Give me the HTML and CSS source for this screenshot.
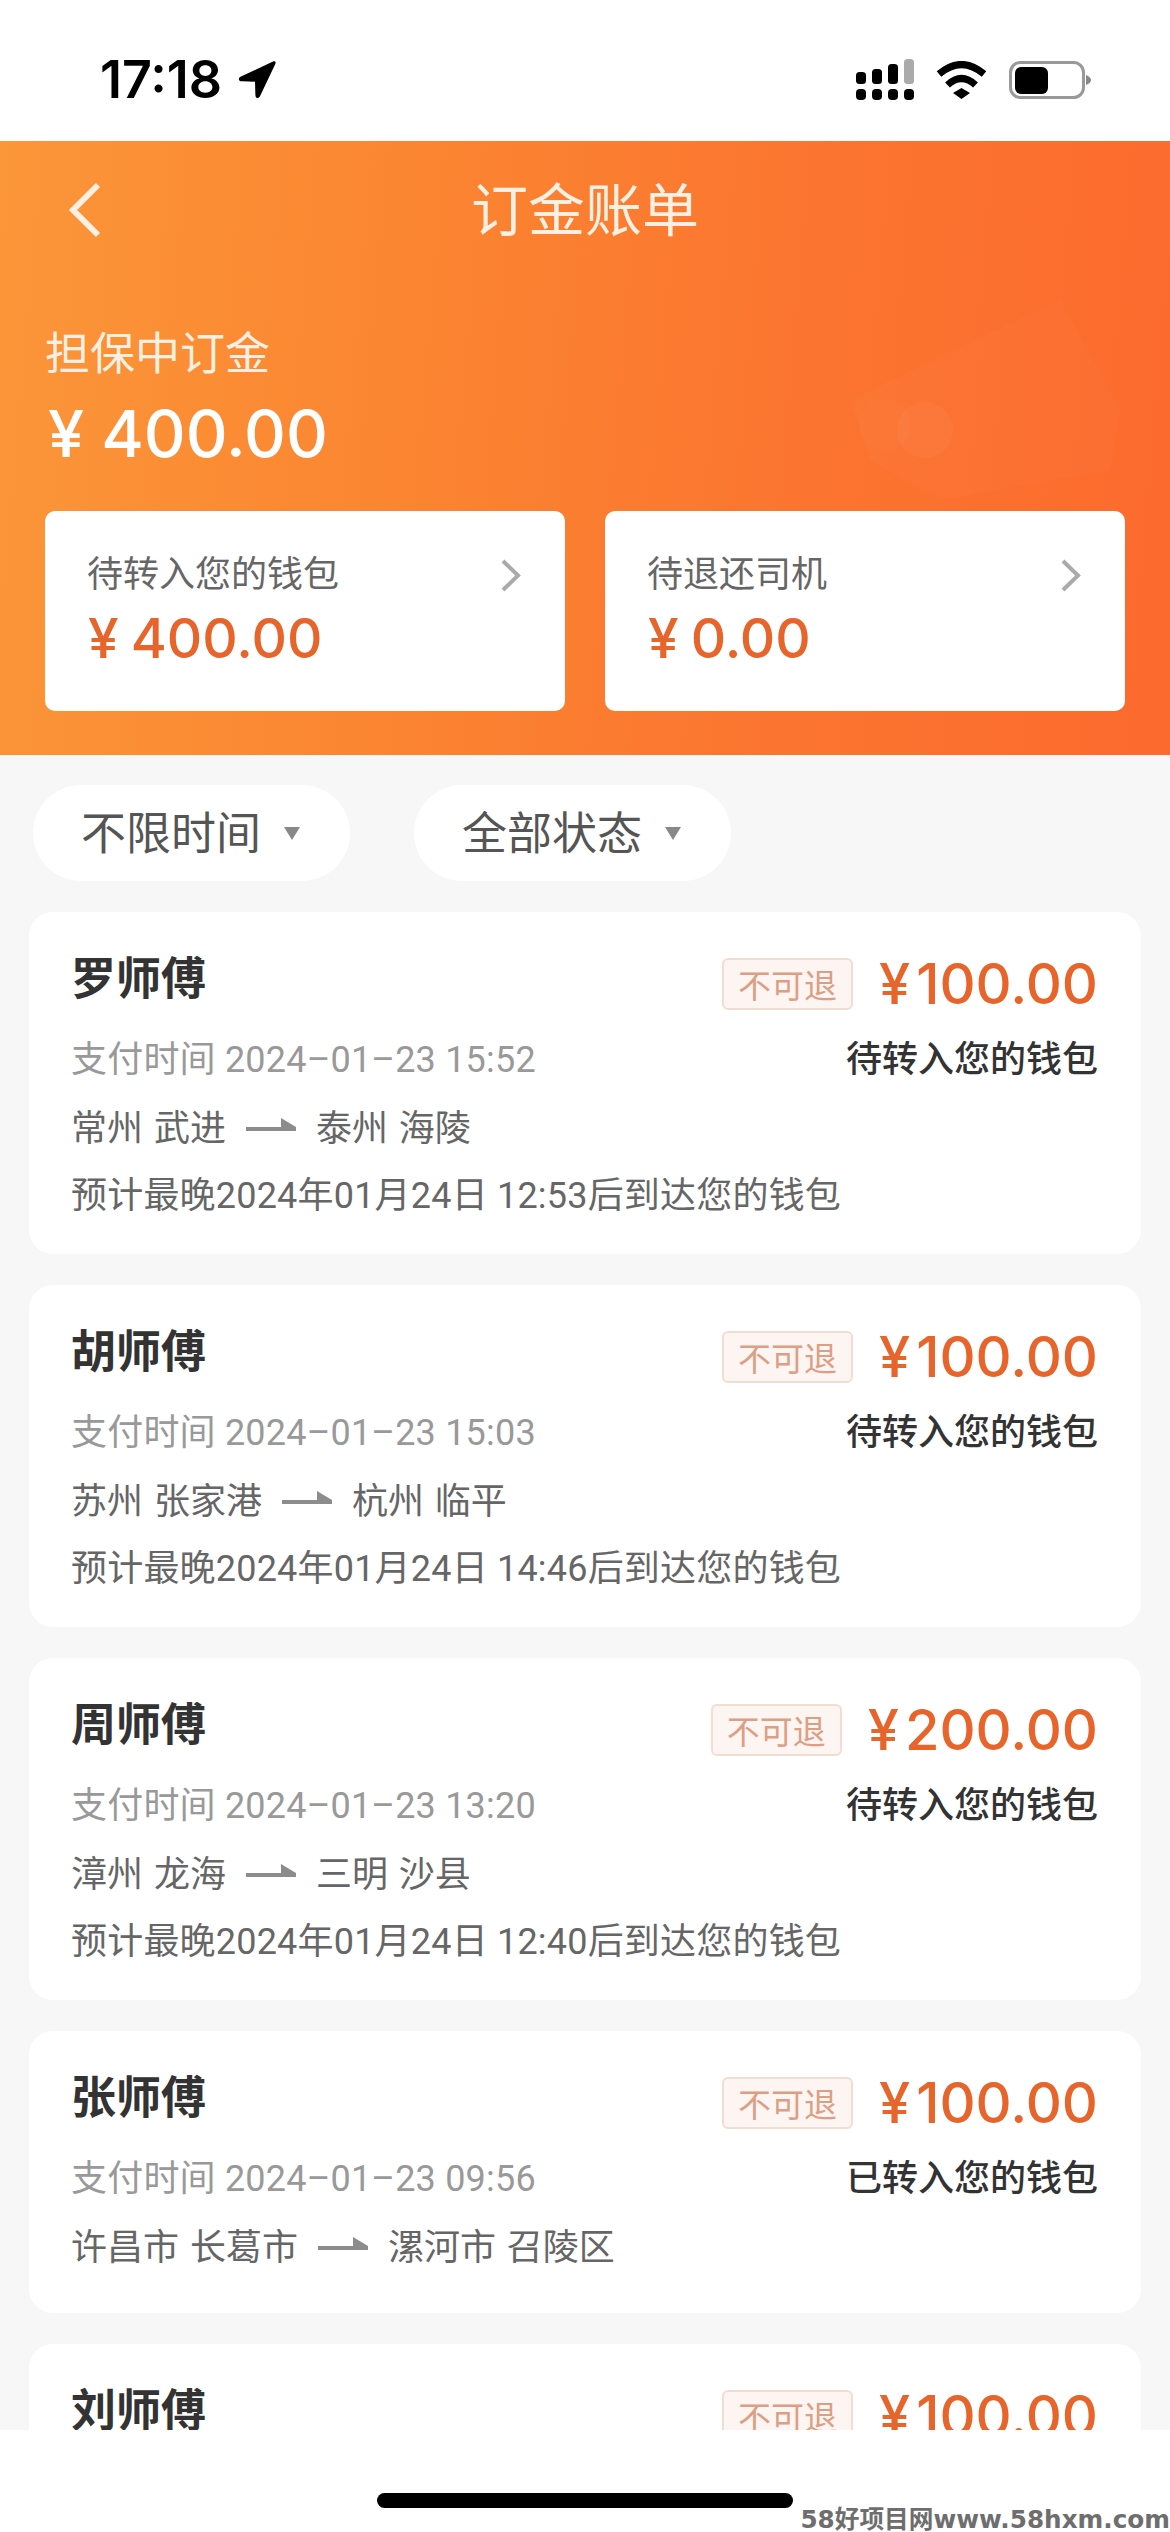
FILE: index.html
```html
<!DOCTYPE html>
<html lang="zh-CN">
<head>
    <meta charset="UTF-8">
    <meta name="viewport" content="width=device-width, initial-scale=1.0">
    <title>订金账单</title>
    <link rel="stylesheet" href="styles.css">
</head>
<body>

    <div class="status-bar">
        <div class="status-time">
            <span>17:18</span>
            <svg class="location-icon" viewBox="0 0 38 37"><path d="M35 .6 3 15.6c-3.4 1.700-2.600 4.600 1 4.700l13 .4.400 13.300c.1 3.600 3.200 4.200 4.700 1L37.300 3c.9-2-.4-3.300-2.300-2.400z"/></svg>
        </div>
        <div class="status-icons">
            <svg class="signal-icon" viewBox="0 0 58 41">
                <rect x="0" y="13" width="10" height="12" rx="3.500"/>
                <rect x="16" y="10" width="10" height="15" rx="3.500"/>
                <rect x="32" y="5" width="10" height="20" rx="3.500"/>
                <rect class="signal-off" x="48" y="0" width="10" height="25" rx="3.500"/>
                <rect x="0" y="30" width="10" height="11" rx="4"/>
                <rect x="16" y="30" width="10" height="11" rx="4"/>
                <rect x="32" y="30" width="10" height="11" rx="4"/>
                <rect x="48" y="30" width="10" height="11" rx="4"/>
            </svg>
            <svg class="wifi-icon" viewBox="0 0 51 38">
                <path d="M3 13Q25.500-6 48 13" fill="none" stroke="#000" stroke-width="7"/>
                <path d="M11.500 24Q25.500 11 39.500 24" fill="none" stroke="#000" stroke-width="7"/>
                <path d="M17 32 25.500 27 34 32 25.500 38z"/>
            </svg>
            <svg class="battery-icon" viewBox="0 0 82 38">
                <rect x="1.500" y="1.500" width="73" height="35" rx="10" fill="none" stroke="#999" stroke-width="3"/>
                <rect x="6" y="6" width="33" height="27" rx="6"/>
                <path d="M77 14c3 1 5 3 5 5s-2 4-5 5z" fill="#888"/>
            </svg>
        </div>
    </div>

    <div class="header">
        <!-- faint bank card behind the summary -->
        <svg class="header-decor" viewBox="0 0 410 220">
            <path d="M90 100 300 0 360 110 350 170 180 200 110 160z" fill="#fff" opacity="0.018"/>
            <circle cx="165" cy="130" r="28" fill="#fff" opacity="0.035"/>
            <circle cx="125" cy="125" r="26" fill="#fff" opacity="0.015"/>
        </svg>
        <div class="nav">
            <svg class="back-icon" viewBox="0 0 32 56"><path d="M29 3 4 28l25 25" fill="none" stroke="#fdf0e2" stroke-width="6"/></svg>
            <div class="nav-title">订金账单</div>
        </div>
        <div class="held-label">担保中订金</div>
        <div class="held-amount"><span class="yen">¥</span>400.00</div>
        <div class="summary">
            <div class="summary-card">
                <div class="summary-top">
                    <span>待转入您的钱包</span>
                    <svg class="chevron" viewBox="0 0 20 33"><path d="M2 2l15 14.500L2 31" fill="none" stroke="#aaa" stroke-width="4"/></svg>
                </div>
                <div class="summary-amount"><span class="yen">¥</span>400.00</div>
            </div>
            <div class="summary-card">
                <div class="summary-top">
                    <span>待退还司机</span>
                    <svg class="chevron" viewBox="0 0 20 33"><path d="M2 2l15 14.500L2 31" fill="none" stroke="#aaa" stroke-width="4"/></svg>
                </div>
                <div class="summary-amount"><span class="yen">¥</span>0.00</div>
            </div>
        </div>
    </div>

    <div class="content">
        <div class="filters">
            <div class="filter"><span>不限时间</span><i class="caret"></i></div>
            <div class="filter"><span>全部状态</span><i class="caret"></i></div>
        </div>

        <div class="bill">
            <div class="bill-top">
                <div class="driver">罗师傅</div>
                <div class="bill-money">
                    <span class="tag">不可退</span>
                    <span class="bill-amount"><span class="yen">¥</span>100.00</span>
                </div>
            </div>
            <div class="bill-mid">
                <div class="pay-time">支付时间 2024–01–23 15:52</div>
                <div class="bill-status">待转入您的钱包</div>
            </div>
            <div class="route">
                <span>常州 武进</span>
                <svg class="route-arrow" viewBox="0 0 50 14"><path d="M0 9h35V0l15 9v4H0z"/></svg>
                <span>泰州 海陵</span>
            </div>
            <div class="eta">预计最晚2024年01月24日 12:53后到达您的钱包</div>
        </div>

        <div class="bill">
            <div class="bill-top">
                <div class="driver">胡师傅</div>
                <div class="bill-money">
                    <span class="tag">不可退</span>
                    <span class="bill-amount"><span class="yen">¥</span>100.00</span>
                </div>
            </div>
            <div class="bill-mid">
                <div class="pay-time">支付时间 2024–01–23 15:03</div>
                <div class="bill-status">待转入您的钱包</div>
            </div>
            <div class="route">
                <span>苏州 张家港</span>
                <svg class="route-arrow" viewBox="0 0 50 14"><path d="M0 9h35V0l15 9v4H0z"/></svg>
                <span>杭州 临平</span>
            </div>
            <div class="eta">预计最晚2024年01月24日 14:46后到达您的钱包</div>
        </div>

        <div class="bill">
            <div class="bill-top">
                <div class="driver">周师傅</div>
                <div class="bill-money">
                    <span class="tag">不可退</span>
                    <span class="bill-amount"><span class="yen">¥</span>200.00</span>
                </div>
            </div>
            <div class="bill-mid">
                <div class="pay-time">支付时间 2024–01–23 13:20</div>
                <div class="bill-status">待转入您的钱包</div>
            </div>
            <div class="route">
                <span>漳州 龙海</span>
                <svg class="route-arrow" viewBox="0 0 50 14"><path d="M0 9h35V0l15 9v4H0z"/></svg>
                <span>三明 沙县</span>
            </div>
            <div class="eta">预计最晚2024年01月24日 12:40后到达您的钱包</div>
        </div>

        <div class="bill">
            <div class="bill-top">
                <div class="driver">张师傅</div>
                <div class="bill-money">
                    <span class="tag">不可退</span>
                    <span class="bill-amount"><span class="yen">¥</span>100.00</span>
                </div>
            </div>
            <div class="bill-mid">
                <div class="pay-time">支付时间 2024–01–23 09:56</div>
                <div class="bill-status">已转入您的钱包</div>
            </div>
            <div class="route">
                <span>许昌市 长葛市</span>
                <svg class="route-arrow" viewBox="0 0 50 14"><path d="M0 9h35V0l15 9v4H0z"/></svg>
                <span>漯河市 召陵区</span>
            </div>
        </div>

        <div class="bill">
            <div class="bill-top">
                <div class="driver">刘师傅</div>
                <div class="bill-money">
                    <span class="tag">不可退</span>
                    <span class="bill-amount"><span class="yen">¥</span>100.00</span>
                </div>
            </div>
        </div>
    </div>

    <div class="home-area">
        <div class="home-bar"></div>
        <div class="watermark">58好项目网www.58hxm.com</div>
    </div>

</body>
</html>
```

FILE: styles.css
```css
* {
    box-sizing: border-box;
}

body {
    margin: 0;
    width: 1170px;
    height: 2532px;
    display: flex;
    flex-direction: column;
    overflow: hidden;
    background-color: #fff;
    font-family: Roboto, "Noto Sans CJK SC", sans-serif;
}

/* Status bar */
.status-bar {
    height: 141px;
    flex-shrink: 0;
    display: flex;
    justify-content: space-between;
    align-items: center;
    padding: 18px 79px 0 100px;
}

.status-time {
    display: flex;
    align-items: center;
    gap: 16px;
    font-family: Inter, sans-serif;
    font-size: 52px;
    font-weight: 600;
    line-height: 50px;
    color: #000;
}

.location-icon {
    width: 38px;
    height: 37px;
}

.status-icons {
    display: flex;
    align-items: center;
    gap: 22px;
}

.signal-icon {
    width: 58px;
    height: 41px;
}

.signal-off {
    fill: #aaa;
}

.wifi-icon {
    width: 51px;
    height: 38px;
}

.battery-icon {
    width: 82px;
    height: 38px;
}

/* Orange header */
.header {
    position: relative;
    height: 614px;
    flex-shrink: 0;
    overflow: hidden;
    padding: 0 45px;
    background: linear-gradient(95deg, #fb9639 0%, #fb8531 35%, #fb7630 65%, #fc6a2d 100%);
    color: #fdf0e2;
}

.header-decor {
    position: absolute;
    left: 760px;
    top: 159px;
    width: 410px;
    height: 220px;
}

.nav {
    position: relative;
    height: 142px;
    display: flex;
    justify-content: center;
    align-items: center;
}

.back-icon {
    position: absolute;
    left: 24px;
    top: 41px;
    width: 32px;
    height: 56px;
}

.nav-title {
    font-size: 57px;
    line-height: 70px;
}

.held-label {
    position: relative;
    margin-top: 42px;
    font-size: 45px;
    line-height: 60px;
}

.held-amount {
    position: relative;
    margin-top: 7px;
    padding-left: 3px;
    font-family: Inter, "Noto Sans CJK SC", sans-serif;
    font-size: 65px;
    font-weight: 500;
    line-height: 84px;
    color: #fff;
}

.held-amount .yen {
    margin-right: 17px;
}

.yen {
    margin-right: 6px;
}

.summary {
    position: relative;
    margin-top: 35px;
    display: flex;
    gap: 40px;
}

.summary-card {
    width: 520px;
    height: 200px;
    padding: 39px 44px 0 42px;
    border-radius: 10px;
    background-color: #fff;
}

.summary-top {
    display: flex;
    justify-content: space-between;
    align-items: center;
    height: 50px;
    font-size: 36px;
    line-height: 50px;
    color: #666;
}

.chevron {
    width: 20px;
    height: 33px;
}

.summary-amount {
    margin-top: -2px;
    padding-left: 1px;
    font-family: Inter, "Noto Sans CJK SC", sans-serif;
    font-size: 55px;
    font-weight: 500;
    line-height: 80px;
    color: #e7642b;
}

.summary-amount .yen {
    margin-right: 12px;
}

/* Filters and bills */
.content {
    flex: 1;
    min-height: 0;
    overflow: hidden;
    padding: 30px 29px 0;
    background-color: #f7f7f7;
}

.filters {
    display: flex;
    gap: 64px;
    margin: 0 0 31px 4px;
}

.filter {
    height: 96px;
    display: flex;
    align-items: center;
    gap: 23px;
    padding: 0 50px 6px 48px;
    border-radius: 48px;
    background-color: #fff;
    font-size: 45px;
    color: #555;
}

.caret {
    width: 0;
    height: 0;
    margin-top: 6px;
    border-left: 8px solid transparent;
    border-right: 8px solid transparent;
    border-top: 13px solid #888;
}

.bill {
    margin-bottom: 31px;
    padding: 24px 43px 28px 42px;
    border-radius: 24px;
    background-color: #fff;
}

.bill-top,
.bill-mid {
    display: flex;
    justify-content: space-between;
    align-items: center;
}

.bill-top {
    height: 78px;
}

.bill-mid {
    height: 83px;
}

.driver {
    font-size: 45px;
    font-weight: 700;
    color: #333;
}

.bill-money {
    display: flex;
    align-items: center;
    gap: 26px;
    margin-top: 18px;
}

.tag {
    width: 131px;
    height: 52px;
    display: flex;
    justify-content: center;
    align-items: center;
    border: 2px solid #f3ddd3;
    border-radius: 6px;
    background-color: #fdf5f1;
    font-size: 33px;
    color: #dc9f86;
}

.bill-amount {
    font-family: Inter, "Noto Sans CJK SC", sans-serif;
    font-size: 56px;
    font-weight: 500;
    color: #e7642b;
}

.pay-time {
    font-size: 36px;
    letter-spacing: 0.2px;
    color: #999;
}

.bill-status {
    font-size: 36px;
    font-weight: 500;
    color: #333;
}

.route {
    height: 56px;
    margin-bottom: 13px;
    display: flex;
    align-items: center;
    gap: 20px;
    font-size: 36px;
    word-spacing: 2px;
    color: #666;
}

.route-arrow {
    width: 50px;
    height: 14px;
    fill: #8c8c8c;
}

.eta {
    font-size: 36px;
    letter-spacing: 0.2px;
    line-height: 60px;
    color: #666;
}

/* Bottom strip */
.home-area {
    position: relative;
    height: 102px;
    flex-shrink: 0;
    background-color: #fff;
}

.home-bar {
    width: 416px;
    height: 15px;
    margin: 63px auto 0;
    border-radius: 8px;
    background-color: #000;
}

.watermark {
    position: absolute;
    right: 0;
    bottom: -5px;
    font-family: "DejaVu Sans", "Noto Sans CJK SC", sans-serif;
    font-size: 24.7px;
    font-weight: 700;
    line-height: 34px;
    white-space: nowrap;
    color: #6e6e6e;
}
```
